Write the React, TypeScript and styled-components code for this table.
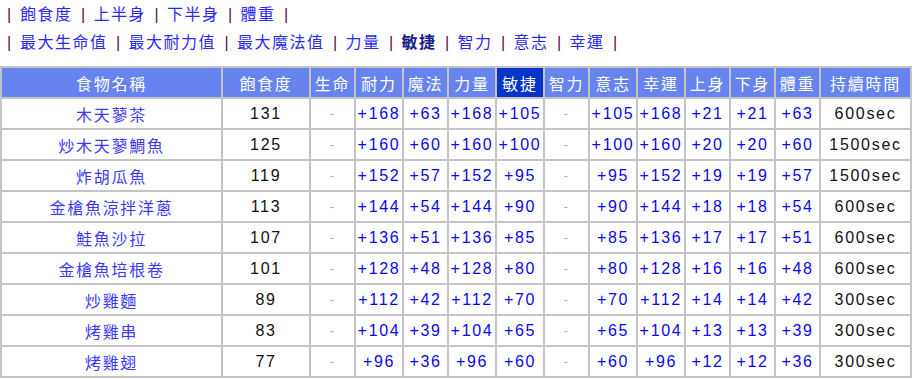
import React from "react";
import styled, { createGlobalStyle } from "styled-components";

const GlobalStyle = createGlobalStyle`
  body {
    margin: 0;
    background: #ffffff;
    font-family: "Liberation Sans", "Noto Sans CJK TC", Arial, sans-serif;
  }
`;

const Page = styled.div`
  width: 915px;
  height: 379px;
  overflow: hidden;
`;

const Nav = styled.div`
  padding: 1px 0 0 0;
  font-size: 16px;
  line-height: 28px;
  letter-spacing: 1.5px;
`;

const NavLine = styled.div`
  display: flex;
  align-items: center;
  white-space: nowrap;
`;

const Sep = styled.span<{ $lead?: boolean }>`
  display: inline-block;
  width: ${(p) => (p.$lead ? "20px" : "21px")};
  padding-left: ${(p) => (p.$lead ? "7px" : "0")};
  box-sizing: border-box;
  text-align: ${(p) => (p.$lead ? "left" : "center")};
  letter-spacing: 0;
  color: #5c1045;
`;

const NavLink = styled.a<{ $current?: boolean }>`
  color: ${(p) => (p.$current ? "#1c1c8a" : "#2a2aff")};
  font-weight: ${(p) => (p.$current ? 700 : 400)};
  text-decoration: none;
  cursor: pointer;
`;

const Table = styled.table`
  margin-top: 9px;
  width: 910px;
  table-layout: fixed;
  border-collapse: collapse;
  font-size: 16px;
  letter-spacing: 1.7px;
`;

const HeadCell = styled.th<{ $active?: boolean }>`
  height: 29px;
  padding: 0;
  border: 2px solid #c4c4c4;
  background: ${(p) => (p.$active ? "#0434c8" : "#6683ee")};
  color: #ffffff;
  font-weight: 400;
  text-align: center;
  white-space: nowrap;
  overflow: hidden;
`;

type Tone = "name" | "stat" | "plain" | "none";

const Cell = styled.td<{ $tone: Tone }>`
  height: 29px;
  padding: 0;
  border: 2px solid #c4c4c4;
  text-align: center;
  white-space: nowrap;
  overflow: hidden;
  color: ${(p) =>
    p.$tone === "name"
      ? "#3a3aff"
      : p.$tone === "stat"
      ? "#0808f0"
      : p.$tone === "none"
      ? "#aaaaaa"
      : "#111111"};
  font-size: ${(p) => (p.$tone === "none" ? "12px" : "16px")};
`;

const cols = [221, 88, 45, 48, 45, 48, 48, 45, 48, 48, 45, 45, 45, 91];

const headers = [
  "食物名稱",
  "飽食度",
  "生命",
  "耐力",
  "魔法",
  "力量",
  "敏捷",
  "智力",
  "意志",
  "幸運",
  "上身",
  "下身",
  "體重",
  "持續時間",
];

// name, satiety, stamina, mana, dex, upper, duration
const foods: [string, number, number, number, number, number, number][] = [
  ["木天蓼茶", 131, 168, 63, 105, 21, 600],
  ["炒木天蓼鯛魚", 125, 160, 60, 100, 20, 1500],
  ["炸胡瓜魚", 119, 152, 57, 95, 19, 1500],
  ["金槍魚涼拌洋蔥", 113, 144, 54, 90, 18, 600],
  ["鮭魚沙拉", 107, 136, 51, 85, 17, 600],
  ["金槍魚培根卷", 101, 128, 48, 80, 16, 600],
  ["炒雞麵", 89, 112, 42, 70, 14, 300],
  ["烤雞串", 83, 104, 39, 65, 13, 300],
  ["烤雞翅", 77, 96, 36, 60, 12, 300],
];

const navTop = ["飽食度", "上半身", "下半身", "體重"];
const navBottom = ["最大生命值", "最大耐力值", "最大魔法值", "力量", "敏捷", "智力", "意志", "幸運"];

const NavRow: React.FC<{ items: string[]; current?: string }> = ({ items, current }) => (
  <NavLine>
    <Sep $lead>|</Sep>
    {items.map((it) => (
      <React.Fragment key={it}>
        <NavLink $current={it === current}>{it}</NavLink>
        <Sep>|</Sep>
      </React.Fragment>
    ))}
  </NavLine>
);

const Stat: React.FC<{ v: number | null }> = ({ v }) =>
  v === null ? <Cell $tone="none">-</Cell> : <Cell $tone="stat">+{v}</Cell>;

export default function App() {
  return (
    <Page>
      <GlobalStyle />
      <Nav>
        <NavRow items={navTop} />
        <NavRow items={navBottom} current="敏捷" />
      </Nav>
      <Table>
        <colgroup>
          {cols.map((w, i) => (
            <col key={i} style={{ width: w }} />
          ))}
        </colgroup>
        <thead>
          <tr>
            {headers.map((h) => (
              <HeadCell key={h} $active={h === "敏捷"}>
                {h}
              </HeadCell>
            ))}
          </tr>
        </thead>
        <tbody>
          {foods.map(([name, sat, sta, mana, dex, up, dur]) => (
            <tr key={name}>
              <Cell $tone="name">{name}</Cell>
              <Cell $tone="plain">{sat}</Cell>
              <Stat v={null} />
              <Stat v={sta} />
              <Stat v={mana} />
              <Stat v={sta} />
              <Stat v={dex} />
              <Stat v={null} />
              <Stat v={dex} />
              <Stat v={sta} />
              <Stat v={up} />
              <Stat v={up} />
              <Stat v={mana} />
              <Cell $tone="plain">{dur}sec</Cell>
            </tr>
          ))}
        </tbody>
      </Table>
    </Page>
  );
}
